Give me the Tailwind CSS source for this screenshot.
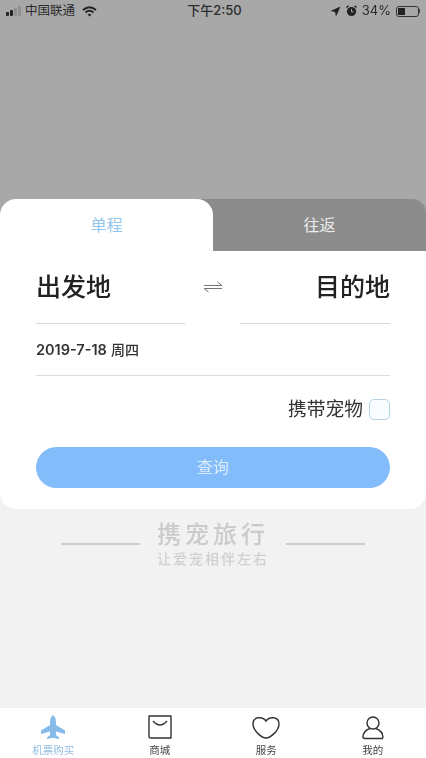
<!DOCTYPE html>
<html lang="zh-CN">
<head>
  <meta charset="UTF-8" />
  <meta name="viewport" content="width=device-width, initial-scale=1.0" />
  <title>携宠旅行</title>
  <script src="https://cdn.jsdelivr.net/npm/@tailwindcss/browser@4"></script>
</head>
<body class="bg-[#f2f2f2] font-['Inter','Noto_Sans_CJK_SC',sans-serif]">
  <div class="w-[426px] h-[758px] flex flex-col overflow-hidden blur-[0.4px]">

    <!-- dimmed header -->
    <div class="h-[251px] shrink-0 bg-[#a8a8a8] flex flex-col justify-between">
      <div class="h-[22px] grid grid-cols-3 items-center px-[6px] text-[#2c2c2c] text-[13px]">
        <div class="flex items-center gap-[4px]">
          <div class="flex items-end gap-[1px] h-[10px]">
            <i class="w-[3px] h-[4px] bg-[#222] rounded-[1px]"></i>
            <i class="w-[3px] h-[6px] bg-[#222] rounded-[1px]"></i>
            <i class="w-[3px] h-[8px] bg-[#8e8e8e] rounded-[1px]"></i>
            <i class="w-[3px] h-[10px] bg-[#8e8e8e] rounded-[1px]"></i>
          </div>
          <span class="text-[12.5px]">中国联通</span>
          <svg class="ml-[3px]" width="15" height="11" viewBox="0 0 15 11" fill="none" stroke="#222" stroke-width="1.8">
            <path d="M1 4 Q7.5 -1.5 14 4" />
            <path d="M3.5 6.5 Q7.5 3 11.5 6.5" />
            <path d="M7.5 10.5 L5.6 8.6 Q7.5 7 9.4 8.6 Z" fill="#222" stroke="none" />
          </svg>
        </div>
        <div class="text-center text-[13px] font-medium pl-[3px]">下午2:50</div>
        <div class="flex items-center justify-end gap-[5px] text-[13px]">
          <svg width="11" height="11" viewBox="0 0 11 11"><path d="M10.5 0.5 L0.5 5 L5 6 L6 10.5 Z" fill="#222" /></svg>
          <svg width="11" height="12" viewBox="0 0 11 12">
            <circle cx="5.5" cy="6.5" r="4.6" fill="#222" />
            <path d="M5.5 4 V6.8 H7.5" stroke="#a8a8a8" fill="none" />
            <path d="M0.5 2.5 L2.5 0.7 M10.5 2.5 L8.5 0.7" stroke="#222" stroke-width="1.5" />
          </svg>
          <span>34%</span>
          <div class="flex items-center">
            <div class="w-[23px] h-[11px] border border-[#333] rounded-[3px] p-[1px]">
              <div class="w-[7px] h-full bg-[#222]"></div>
            </div>
            <i class="w-[1px] h-[4px] bg-[#444]"></i>
          </div>
        </div>
      </div>

      <!-- tabs -->
      <div class="h-[52px] relative">
        <div class="absolute inset-0 left-[190px] bg-[#8c8c8c] rounded-tr-[14px]"></div>
        <div class="relative h-full grid grid-cols-2 text-[16px]">
          <div class="bg-white rounded-t-[16px] flex items-center justify-center text-[#93c6ee]">单程</div>
          <div class="flex items-center justify-center text-[#ececec]">往返</div>
        </div>
      </div>
    </div>

    <!-- form card -->
    <div class="h-[258px] shrink-0 bg-white rounded-b-[16px] px-[36px]">
      <div class="flex items-start justify-between">
        <div class="w-[149px] h-[73px] border-b border-[#d6d6d6] flex items-center text-[25px] font-medium text-[#222] pt-[1px]">出发地</div>
        <svg class="mt-[30px]" width="20" height="12" viewBox="0 0 20 12" fill="none" stroke="#777" stroke-width="1">
          <path d="M1 4.5 H19 L14.5 1" />
          <path d="M19 7.5 H1 L5.5 11" />
        </svg>
        <div class="w-[150px] h-[73px] border-b border-[#d6d6d6] flex items-center justify-end text-[25px] font-medium text-[#222] pt-[1px]">目的地</div>
      </div>
      <div class="h-[52px] border-b border-[#dcdcdc] flex items-center gap-[4px] text-[14.5px] text-[#333]">
        <span class="font-semibold">2019-7-18</span>
        <span class="text-[14px] font-medium">周四</span>
      </div>
      <div class="h-[66px] flex items-center justify-end gap-[6px] text-[18.75px] text-[#333]">
        <span class="mt-[2px]">携带宠物</span>
        <div class="w-[21px] h-[21px] rounded-[5px] border-[1.5px] border-[#b5d5e6] bg-[#fafdff]"></div>
      </div>
      <div class="h-[41px] mt-[5px] rounded-full bg-[#82bcfb] flex items-center justify-center text-[16px] text-[#dcebf8] pb-[2px]">查询</div>
    </div>

    <!-- watermark -->
    <div class="mt-[14px] flex items-start justify-center gap-[16px]">
      <div class="w-[79px] h-[2px] bg-[#cdcdcd] mt-[20px]"></div>
      <div class="w-[114px] flex flex-col items-center">
        <div class="text-[24px] leading-[24px] tracking-[4px] font-medium text-[#cbcbcb]">携宠旅行</div>
        <div class="text-[14px] leading-[24px] tracking-[2px] font-medium text-[#d0d0d0]">让爱宠相伴左右</div>
      </div>
      <div class="w-[79px] h-[2px] bg-[#cdcdcd] mt-[20px]"></div>
    </div>

    <!-- bottom nav -->
    <div class="mt-auto h-[50px] bg-white grid grid-cols-4 text-[10.5px] text-[#444]">
      <div class="flex flex-col items-center text-[#93bde0]">
        <svg class="mt-[7px]" width="24" height="24" viewBox="0 0 24 24" fill="#86bbea">
          <path d="M12 0 Q14.8 2 15 7 V10 L24 15.5 V19 L15 16.5 V20 L18 22.5 V24 L12 22.8 L6 24 V22.5 L9 20 V16.5 L0 19 V15.5 L9 10 V7 Q9.2 2 12 0 Z" />
        </svg>
        <span class="leading-[14px] mt-[5px]">机票购买</span>
      </div>
      <div class="flex flex-col items-center">
        <svg class="mt-[7px]" width="24" height="24" viewBox="0 0 24 24" fill="none" stroke="#333" stroke-width="1.4">
          <path d="M1 1 H23 V23 H3 Q1 23 1 21 Z" stroke-linejoin="round" />
          <path d="M5 6 Q12 14 19 6" />
        </svg>
        <span class="leading-[14px] mt-[5px]">商城</span>
      </div>
      <div class="flex flex-col items-center">
        <svg class="mt-[8px]" width="28" height="23" viewBox="0 0 28 23" fill="none" stroke="#333" stroke-width="1.4">
          <path d="M14 5 C11 0.5 1 0 1 8 C1 15 10 22 14 22 C18 22 27 15 27 8 C27 0 17 0.5 14 5 Z" />
        </svg>
        <span class="leading-[14px] mt-[5px]">服务</span>
      </div>
      <div class="flex flex-col items-center">
        <svg class="mt-[8px]" width="22" height="24" viewBox="0 0 22 24" fill="none" stroke="#333" stroke-width="1.4">
          <circle cx="11" cy="7" r="6" />
          <path d="M8 12.5 Q1 15 1 21 Q1 22.5 3 22.5 H21" />
          <path d="M14 12.5 Q21 15 21 22" />
        </svg>
        <span class="leading-[14px] mt-[4px]">我的</span>
      </div>
    </div>
  </div>
</body>
</html>
